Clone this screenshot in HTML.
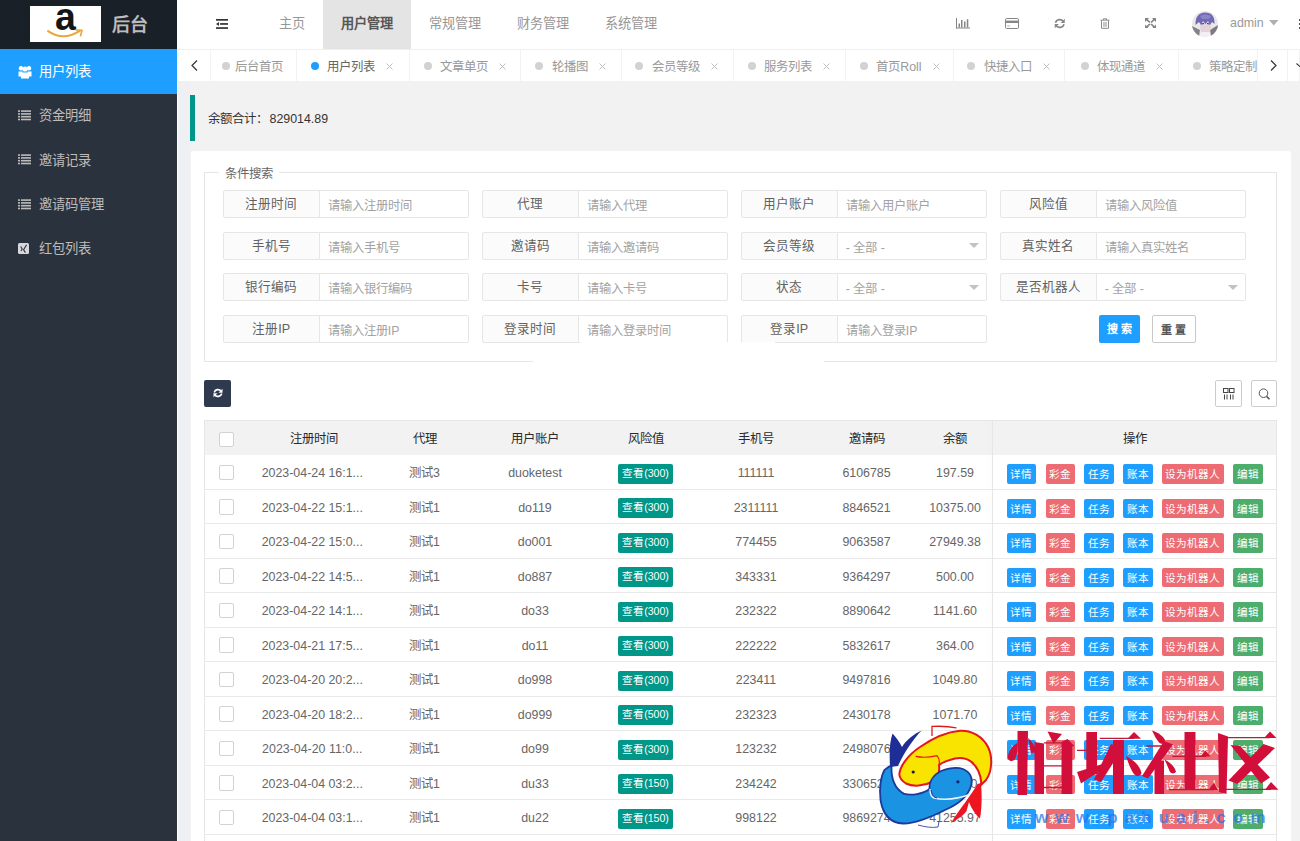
<!DOCTYPE html>
<html lang="zh-CN">
<head>
<meta charset="utf-8">
<style>
*{box-sizing:border-box;margin:0;padding:0}
html,body{width:1300px;height:841px;overflow:hidden}
body{position:relative;background:#f2f2f2;font-family:"Liberation Sans",sans-serif;font-size:12.4px;color:#666}
.a{position:absolute}
svg{display:block}
#logo{left:0;top:0;width:177px;height:49px;background:#192027}
#side{left:0;top:49px;width:177px;height:792px;background:#2a333d}
#hdr{left:177px;top:0;width:1123px;height:50px;background:#fff;border-bottom:1px solid #f0f0f0}
#tabs{left:177px;top:50px;width:1123px;height:31px;background:#fff}
.mi{position:absolute;left:0;width:177px;height:45px;color:#bfbbbb;font-size:13.3px;line-height:45px}
.mi .t{position:absolute;left:39px;top:0}
.mi svg{position:absolute;left:17.5px;top:16.5px}
.nav{position:absolute;top:0;height:49px;line-height:47.4px;color:#979797;font-size:13.2px;text-align:center}
.ico{position:absolute}
.tab{position:absolute;top:0;height:31px;border-right:1px solid #f2f2f2;color:#999;font-size:12.4px;display:flex;align-items:center;padding-left:13.8px;white-space:nowrap;overflow:hidden}
.tab .d{display:inline-block;width:8px;height:8px;border-radius:50%;background:#d2d2d2;margin-right:8.4px}
.tab .x{display:inline-block;margin-left:11.3px;width:7px;height:7px;position:relative;top:1px}
#quote{left:190px;top:95px;width:1100px;height:46px;border-left:5px solid #009688;background:#f2f2f2}
#card{left:191px;top:151px;width:1099.5px;height:700px;background:#fff;border-radius:3px}
#fs{left:204px;top:172px;width:1073px;height:190px;border:1px solid #e6e6e6}
#lg{left:219px;top:164px;padding:0 6px;background:#fff;font-size:12.4px;line-height:20px;color:#666}
.fl{position:absolute;width:96.5px;height:28.3px;border:1px solid #e6e6e6;background:#fbfbfb;border-radius:2px 0 0 2px;text-align:center;line-height:27.5px;color:#626262;font-size:12.6px}
.fi{position:absolute;width:150.5px;height:28.3px;border:1px solid #e6e6e6;background:#fff;border-radius:0 2px 2px 0;line-height:30.4px;color:#a2a2a2;font-size:12.3px;padding-left:8.3px;white-space:nowrap;overflow:hidden}
.fi .tri{position:absolute;right:7.5px;top:10.8px;width:0;height:0;border-left:5.6px solid transparent;border-right:5.6px solid transparent;border-top:5.2px solid #c2c2c2}
.btn{position:absolute;height:28px;line-height:29px;text-align:center;font-size:11px;font-weight:bold;border-radius:2px}
.tb{position:absolute;width:26.5px;height:26.5px;border:1px solid #ccc;border-radius:2px;background:#fff}
#thd{left:204px;top:420px;width:1073px;height:35px;background:#f2f2f2;border:1px solid #e6e6e6;border-bottom:none}
.th{position:absolute;top:421.5px;height:35px;line-height:35px;width:200px;margin-left:-100px;text-align:center;color:#333;font-size:12.4px;font-weight:500;color:#2a2a2a}
.tr{position:absolute;left:0;width:1300px;height:34.51px;line-height:34.51px}
.tr::after{content:'';position:absolute;left:204px;width:1073px;bottom:0;height:1px;background:#e9e9e9}
.c{position:absolute;top:1px;width:200px;margin-left:-100px;text-align:center;color:#666;font-size:12.4px;white-space:nowrap}
.cb{position:absolute;left:218.5px;top:9.5px;width:15.5px;height:15.5px;border:1px solid #d2d2d2;border-radius:2px;background:#fff}
.bd{display:inline-block;font-weight:500;background:#009688;color:#fff;height:19.7px;line-height:19.7px;padding:0 4.4px;font-size:10.6px;border-radius:2px;vertical-align:middle;position:relative;top:0px}
.ops{position:absolute;left:1006.5px;top:0;width:260px;height:34px}
.ops b{position:absolute;top:9.3px;width:29.8px;text-align:center;font-weight:500;color:#fff;height:19.6px;line-height:20.5px;font-size:10.6px;border-radius:2px;white-space:nowrap}
.bb{background:#1E9FFF}.br{background:#ed6b72}.bg{background:#4dad6b}
#fix{left:992px;top:420px;width:1px;height:421px;background:#e6e6e6;box-shadow:-3px 0 6px rgba(0,0,0,.06)}
</style>
</head>
<body>
<!-- logo -->
<div id="logo" class="a">
  <div class="a" style="left:30px;top:6px;width:71px;height:35.5px;background:#fff">
    <svg width="71" height="36" viewBox="0 0 71 36">
      <text x="0" y="0" transform="translate(25,24.4) scale(0.96,1)" font-family="Liberation Sans" font-weight="bold" font-size="39" fill="#151515">a</text>
      <path d="M18.1,25.1 Q33,35.6 49.7,24.8" stroke="#e8a83a" stroke-width="2.1" fill="none" stroke-linecap="round"/>
      <path d="M46.3,24 L52,24.4 L50.6,29.6" stroke="#e8a83a" stroke-width="1.7" fill="none" stroke-linecap="round" stroke-linejoin="round"/>
    </svg>
  </div>
  <div class="a" style="left:112px;top:9.7px;font-size:18px;line-height:30px;color:#bfbbbb;font-weight:bold">后台</div>
</div>
<div id="side" class="a">
  <div class="mi" style="top:0;background:#1E9FFF;color:#fff">
    <svg width="14" height="14" viewBox="0 0 14 14" style="top:15.5px"><g fill="#fff"><circle cx="3" cy="3.2" r="2.2"/><circle cx="11" cy="3.2" r="2.2"/><circle cx="7" cy="4" r="2.6"/><path d="M0.5,6.5 h4 v5 h-4 z M9.5,6.5 h4 v5 h-4 z"/><path d="M3,7.5 h8 v6 h-8 z"/></g></svg>
    <span class="t">用户列表</span></div>
  <div class="mi" style="top:44px"><svg width="13" height="11" viewBox="0 0 13 11"><g fill="#bfbbbb"><rect x="0" y="0.3" width="2" height="1.6"/><rect x="3" y="0.3" width="10" height="1.6"/><rect x="0" y="3.1" width="2" height="1.6"/><rect x="3" y="3.1" width="10" height="1.6"/><rect x="0" y="5.9" width="2" height="1.6"/><rect x="3" y="5.9" width="10" height="1.6"/><rect x="0" y="8.7" width="2" height="1.6"/><rect x="3" y="8.7" width="10" height="1.6"/></g></svg><span class="t">资金明细</span></div>
  <div class="mi" style="top:88.5px"><svg width="13" height="11" viewBox="0 0 13 11"><g fill="#bfbbbb"><rect x="0" y="0.3" width="2" height="1.6"/><rect x="3" y="0.3" width="10" height="1.6"/><rect x="0" y="3.1" width="2" height="1.6"/><rect x="3" y="3.1" width="10" height="1.6"/><rect x="0" y="5.9" width="2" height="1.6"/><rect x="3" y="5.9" width="10" height="1.6"/><rect x="0" y="8.7" width="2" height="1.6"/><rect x="3" y="8.7" width="10" height="1.6"/></g></svg><span class="t">邀请记录</span></div>
  <div class="mi" style="top:133px"><svg width="13" height="11" viewBox="0 0 13 11"><g fill="#bfbbbb"><rect x="0" y="0.3" width="2" height="1.6"/><rect x="3" y="0.3" width="10" height="1.6"/><rect x="0" y="3.1" width="2" height="1.6"/><rect x="3" y="3.1" width="10" height="1.6"/><rect x="0" y="5.9" width="2" height="1.6"/><rect x="3" y="5.9" width="10" height="1.6"/><rect x="0" y="8.7" width="2" height="1.6"/><rect x="3" y="8.7" width="10" height="1.6"/></g></svg><span class="t">邀请码管理</span></div>
  <div class="mi" style="top:177px"><svg width="11" height="11" viewBox="0 0 11 11" style="left:18px;top:17px"><rect x="0" y="0" width="11" height="11" rx="1.5" fill="#d8d8dc"/><path d="M2.6,3.5 L4.2,6 L3,8 M8.6,1.8 L5.6,6.8 L7.4,9.6" stroke="#2a333d" stroke-width="1.1" fill="none"/></svg><span class="t">红包列表</span></div>
</div>
<div id="hdr" class="a">
  <svg class="ico" style="left:39px;top:18.5px" width="12" height="10" viewBox="0 0 12 10"><g fill="#333"><rect x="0" y="0" width="12" height="1.7"/><rect x="4" y="4.1" width="8" height="1.7"/><rect x="0" y="8.2" width="12" height="1.7"/><path d="M0,4.95 L3,3 L3,6.9 Z"/></g></svg>
  <div class="nav" style="left:84px;width:62px">主页</div>
  <div class="nav" style="left:146px;width:88px;background:#e4e4e4;color:#565656;font-weight:bold">用户管理</div>
  <div class="nav" style="left:234px;width:88px">常规管理</div>
  <div class="nav" style="left:322px;width:88px">财务管理</div>
  <div class="nav" style="left:410px;width:88px">系统管理</div>
  <!-- bar chart -->
  <svg class="ico" style="left:779px;top:18px" width="14" height="10.5" viewBox="0 0 14 10.5"><g fill="#858585"><rect x="0" y="0" width="1" height="10.5"/><rect x="0" y="9.5" width="14" height="1"/><rect x="2.5" y="5.5" width="1.5" height="4"/><rect x="5" y="2" width="1.5" height="7.5"/><rect x="8" y="3.5" width="1.5" height="6"/><rect x="10.8" y="1.2" width="1.5" height="8.3"/></g></svg>
  <!-- card -->
  <svg class="ico" style="left:828px;top:17.5px" width="14" height="11" viewBox="0 0 14 11"><rect x="0.5" y="0.5" width="13" height="10" rx="1.2" fill="none" stroke="#858585" stroke-width="1"/><rect x="0.5" y="2.6" width="13" height="2.4" fill="#858585"/><rect x="2" y="7.5" width="3" height="0.9" fill="#aaa"/></svg>
  <!-- refresh -->
  <svg class="ico" style="left:877px;top:17.5px" width="11.5" height="11" viewBox="0 0 12 11"><g fill="none" stroke="#858585" stroke-width="1.8"><path d="M1.5,4.8 A4.6,4.6 0 0 1 9.6,3.2"/><path d="M10.5,6.2 A4.6,4.6 0 0 1 2.4,7.8"/></g><path d="M11.2,0.6 L11.2,4.9 L7,4.9 Z" fill="#858585"/><path d="M0.8,10.4 L0.8,6.1 L5,6.1 Z" fill="#858585"/></svg>
  <!-- trash -->
  <svg class="ico" style="left:922.5px;top:17.5px" width="10" height="11" viewBox="0 0 10 11"><g fill="none" stroke="#8a8a8a" stroke-width="1"><path d="M0.5,2.2 H9.5"/><path d="M3.5,2 V0.8 H6.5 V2"/><path d="M1.5,2.5 V10.3 H8.5 V2.5"/><path d="M3.8,4 V8.8 M5,4 V8.8 M6.2,4 V8.8" stroke="#aaa"/></g></svg>
  <!-- fullscreen -->
  <svg class="ico" style="left:968px;top:17.5px" width="11" height="10.5" viewBox="0 0 11 10.5"><g fill="#858585"><path d="M0,0 H4 L2.8,1.2 L5.5,3.9 L4.3,5.1 L1.6,2.4 L0,4 Z"/><path d="M11,0 H7 L8.2,1.2 L5.5,3.9 L6.7,5.1 L9.4,2.4 L11,4 Z"/><path d="M0,10.5 H4 L2.8,9.3 L5.5,6.6 L4.3,5.4 L1.6,8.1 L0,6.5 Z"/><path d="M11,10.5 H7 L8.2,9.3 L5.5,6.6 L6.7,5.4 L9.4,8.1 L11,6.5 Z"/></g></svg>
  <!-- avatar -->
  <svg class="ico" style="left:1014.5px;top:10.5px" width="26" height="26" viewBox="0 0 26 26"><defs><clipPath id="av"><circle cx="13" cy="13" r="13"/></clipPath></defs><g clip-path="url(#av)"><rect width="26" height="26" fill="#ebe8ec"/><path d="M0,15 L8,19 L7,26 L0,26 Z" fill="#858387"/><path d="M26,14 L18,19 L19,26 L26,26 Z" fill="#7d7b7f"/><ellipse cx="13.5" cy="16" rx="5.5" ry="7" fill="#e2d3da"/><path d="M9,21 L18,21 L19,26 L8,26 Z" fill="#f3eff4"/><path d="M3.5,14 Q3,2 13,1.5 Q23,1.5 22.5,13 L20,11 L18,14 L16,10 L13.5,13 L11,10 L9,14 L7,11 Z" fill="#7069b5"/><path d="M8,5 Q13,2 19,5 L17,8 L10,8 Z" fill="#8a84c8"/><path d="M9.5,13 L12,12.5 M15,12.5 L17.5,13" stroke="#3b3560" stroke-width="1"/></g></svg>
  <div class="nav" style="left:1053px;color:#999;font-size:12.4px;line-height:47px">admin</div>
  <svg class="ico" style="left:1092px;top:20px" width="9.5" height="5.5" viewBox="0 0 9.5 5.5"><path d="M0,0 H9.5 L4.75,5.5 Z" fill="#b0b0b0"/></svg>
  <div class="a" style="left:1121.5px;top:19px;width:3px;height:10px;background:repeating-linear-gradient(#555 0 2px,transparent 2px 4px)"></div>
</div>
<div id="tabs" class="a">
  <svg class="ico" style="left:13.5px;top:10px" width="7" height="11" viewBox="0 0 7 11"><path d="M6,0.5 L1,5.5 L6,10.5" fill="none" stroke="#333" stroke-width="1.2"/></svg>
  <div class="a" style="left:32.5px;top:0;width:1px;height:31px;background:#f2f2f2"></div>
  <div class="tab" style="left:33.0px;width:87.0px;padding-left:12px"><span class="d" style="margin-right:4.5px"></span><span class="tt">后台首页</span></div>
  <div class="tab" style="left:120.0px;width:113.0px"><span class="d" style="background:#1e9fff"></span><span class="tt" style="color:#666">用户列表</span><svg class="x" viewBox="0 0 7 7"><path d="M0.5,0.5 L6.5,6.5 M6.5,0.5 L0.5,6.5" stroke="#b9b9b9" stroke-width="0.9"/></svg></div>
  <div class="tab" style="left:233.0px;width:111.4px"><span class="d"></span><span class="tt">文章单页</span><svg class="x" viewBox="0 0 7 7"><path d="M0.5,0.5 L6.5,6.5 M6.5,0.5 L0.5,6.5" stroke="#b9b9b9" stroke-width="0.9"/></svg></div>
  <div class="tab" style="left:344.4px;width:100.3px"><span class="d"></span><span class="tt">轮播图</span><svg class="x" viewBox="0 0 7 7"><path d="M0.5,0.5 L6.5,6.5 M6.5,0.5 L0.5,6.5" stroke="#b9b9b9" stroke-width="0.9"/></svg></div>
  <div class="tab" style="left:444.7px;width:112.3px"><span class="d"></span><span class="tt">会员等级</span><svg class="x" viewBox="0 0 7 7"><path d="M0.5,0.5 L6.5,6.5 M6.5,0.5 L0.5,6.5" stroke="#b9b9b9" stroke-width="0.9"/></svg></div>
  <div class="tab" style="left:557.0px;width:112.0px"><span class="d"></span><span class="tt">服务列表</span><svg class="x" viewBox="0 0 7 7"><path d="M0.5,0.5 L6.5,6.5 M6.5,0.5 L0.5,6.5" stroke="#b9b9b9" stroke-width="0.9"/></svg></div>
  <div class="tab" style="left:669.0px;width:107.5px"><span class="d"></span><span class="tt">首页Roll</span><svg class="x" viewBox="0 0 7 7"><path d="M0.5,0.5 L6.5,6.5 M6.5,0.5 L0.5,6.5" stroke="#b9b9b9" stroke-width="0.9"/></svg></div>
  <div class="tab" style="left:776.5px;width:111.5px"><span class="d"></span><span class="tt">快捷入口</span><svg class="x" viewBox="0 0 7 7"><path d="M0.5,0.5 L6.5,6.5 M6.5,0.5 L0.5,6.5" stroke="#b9b9b9" stroke-width="0.9"/></svg></div>
  <div class="tab" style="left:888.0px;width:114.0px;padding-left:15.6px"><span class="d"></span><span class="tt">体现通道</span><svg class="x" viewBox="0 0 7 7"><path d="M0.5,0.5 L6.5,6.5 M6.5,0.5 L0.5,6.5" stroke="#b9b9b9" stroke-width="0.9"/></svg></div>
  <div class="tab" style="left:1002.0px;width:121.0px"><span class="d"></span><span class="tt">策略定制</span></div>
  <div class="a" style="left:1080px;top:0;width:31px;height:31px;background:#fff;border-left:1px solid #f2f2f2;border-right:1px solid #f2f2f2">
    <svg class="ico" style="left:12px;top:10px" width="7" height="11" viewBox="0 0 7 11"><path d="M1,0.5 L6,5.5 L1,10.5" fill="none" stroke="#333" stroke-width="1.2"/></svg>
  </div>
  <svg class="ico" style="left:1119px;top:13px" width="6" height="5" viewBox="0 0 6 5"><path d="M0.5,0.5 L5,4.5" stroke="#333" stroke-width="1.1"/></svg>
</div>
<div class="a" style="left:177px;top:81px;width:1px;height:760px;background:#fff"></div>
<div class="a" style="left:178px;top:81px;width:12px;height:760px;background:#eff0f3"></div>
<div id="quote" class="a"><div class="a" style="left:13px;top:1px;line-height:46px;color:#333;font-size:12.4px">余额合计：<span style="margin-left:1.5px">829014.89</span></div></div>
<div id="card" class="a"></div>
<div id="fs" class="a"></div>
<div id="lg" class="a">条件搜索</div>
<div class="fl" style="left:223px;top:190px">注册时间</div>
<div class="fi" style="left:318.5px;top:190px">请输入注册时间</div>
<div class="fl" style="left:482px;top:190px">代理</div>
<div class="fi" style="left:577.5px;top:190px">请输入代理</div>
<div class="fl" style="left:741px;top:190px">用户账户</div>
<div class="fi" style="left:836.5px;top:190px">请输入用户账户</div>
<div class="fl" style="left:1000px;top:190px">风险值</div>
<div class="fi" style="left:1095.5px;top:190px">请输入风险值</div>
<div class="fl" style="left:223px;top:231.6px">手机号</div>
<div class="fi" style="left:318.5px;top:231.6px">请输入手机号</div>
<div class="fl" style="left:482px;top:231.6px">邀请码</div>
<div class="fi" style="left:577.5px;top:231.6px">请输入邀请码</div>
<div class="fl" style="left:741px;top:231.6px">会员等级</div>
<div class="fi" style="left:836.5px;top:231.6px">- 全部 -<i class="tri"></i></div>
<div class="fl" style="left:1000px;top:231.6px">真实姓名</div>
<div class="fi" style="left:1095.5px;top:231.6px">请输入真实姓名</div>
<div class="fl" style="left:223px;top:273px">银行编码</div>
<div class="fi" style="left:318.5px;top:273px">请输入银行编码</div>
<div class="fl" style="left:482px;top:273px">卡号</div>
<div class="fi" style="left:577.5px;top:273px">请输入卡号</div>
<div class="fl" style="left:741px;top:273px">状态</div>
<div class="fi" style="left:836.5px;top:273px">- 全部 -<i class="tri"></i></div>
<div class="fl" style="left:1000px;top:273px">是否机器人</div>
<div class="fi" style="left:1095.5px;top:273px">- 全部 -<i class="tri"></i></div>
<div class="fl" style="left:223px;top:314.5px">注册IP</div>
<div class="fi" style="left:318.5px;top:314.5px">请输入注册IP</div>
<div class="fl" style="left:482px;top:314.5px">登录时间</div>
<div class="fi" style="left:577.5px;top:314.5px">请输入登录时间</div>
<div class="fl" style="left:741px;top:314.5px">登录IP</div>
<div class="fi" style="left:836.5px;top:314.5px">请输入登录IP</div>
<div class="btn" style="left:1098.5px;top:315px;width:41.5px;background:#1E9FFF;color:#fff">搜 索</div>
<div class="btn" style="left:1152px;top:315px;width:43.5px;background:#fff;border:1px solid #c9c9c9;color:#555">重 置</div>
<div class="a" style="left:579.5px;top:342px;width:195px;height:12px;background:#fff"></div>
<div class="a" style="left:533px;top:352px;width:291px;height:14px;background:#fff"></div>
<div class="a" style="left:204px;top:380px;width:27px;height:26.5px;background:#2f3a4f;border-radius:2px"><svg class="ico" style="left:8.5px;top:8px" width="10" height="10" viewBox="0 0 12 11"><g fill="none" stroke="#fff" stroke-width="2"><path d="M1.5,4.8 A4.6,4.6 0 0 1 9.6,3.2"/><path d="M10.5,6.2 A4.6,4.6 0 0 1 2.4,7.8"/></g><path d="M11.4,0.3 L11.4,5.2 L6.6,5.2 Z" fill="#fff"/><path d="M0.6,10.7 L0.6,5.8 L5.4,5.8 Z" fill="#fff"/></svg></div>
<div class="tb" style="left:1215px;top:380px"><svg class="ico" style="left:7px;top:7px" width="12" height="12" viewBox="0 0 12 12"><g fill="none" stroke="#444" stroke-width="1"><rect x="0.5" y="0.5" width="4.5" height="4"/><rect x="6.5" y="0.5" width="4.5" height="4"/><path d="M1.5,6.5 V11.5 M4,6.5 V11.5 M7.5,6.5 V11.5 M10,6.5 V11.5"/></g></svg></div>
<div class="tb" style="left:1250.5px;top:380px"><svg class="ico" style="left:6.5px;top:7px" width="13" height="13" viewBox="0 0 13 13"><circle cx="5.5" cy="5.2" r="4.3" fill="none" stroke="#555" stroke-width="1"/><path d="M8.6,8.4 L11.5,11.3" stroke="#555" stroke-width="1.6"/></svg></div>
<div id="thd" class="a"></div>
<i class="cb" style="top:431.5px"></i>
<div class="th" style="left:314px">注册时间</div>
<div class="th" style="left:424.5px">代理</div>
<div class="th" style="left:535px">用户账户</div>
<div class="th" style="left:645.5px">风险值</div>
<div class="th" style="left:756px">手机号</div>
<div class="th" style="left:866.5px">邀请码</div>
<div class="th" style="left:955px">余额</div>
<div class="th" style="left:1134.5px">操作</div>
<div class="tr" style="top:455.00px"><i class="cb"></i><span class="c" style="left:312.3px">2023-04-24 16:1...</span><span class="c" style="left:424.5px">测试3</span><span class="c" style="left:535px">duoketest</span><span class="c" style="left:645.5px"><b class="bd">查看(300)</b></span><span class="c" style="left:756px">111111</span><span class="c" style="left:866.5px">6106785</span><span class="c" style="left:955px">197.59</span><span class="ops"><b class="bb" style="left:0">详情</b><b class="br" style="left:39px;width:29.5px">彩金</b><b class="bb" style="left:77.8px">任务</b><b class="bb" style="left:116.5px">账本</b><b class="br" style="left:155.7px;width:61.5px">设为机器人</b><b class="bg" style="left:226.5px">编辑</b></span></div>
<div class="tr" style="top:489.51px"><i class="cb"></i><span class="c" style="left:312.3px">2023-04-22 15:1...</span><span class="c" style="left:424.5px">测试1</span><span class="c" style="left:535px">do119</span><span class="c" style="left:645.5px"><b class="bd">查看(300)</b></span><span class="c" style="left:756px">2311111</span><span class="c" style="left:866.5px">8846521</span><span class="c" style="left:955px">10375.00</span><span class="ops"><b class="bb" style="left:0">详情</b><b class="br" style="left:39px;width:29.5px">彩金</b><b class="bb" style="left:77.8px">任务</b><b class="bb" style="left:116.5px">账本</b><b class="br" style="left:155.7px;width:61.5px">设为机器人</b><b class="bg" style="left:226.5px">编辑</b></span></div>
<div class="tr" style="top:524.02px"><i class="cb"></i><span class="c" style="left:312.3px">2023-04-22 15:0...</span><span class="c" style="left:424.5px">测试1</span><span class="c" style="left:535px">do001</span><span class="c" style="left:645.5px"><b class="bd">查看(300)</b></span><span class="c" style="left:756px">774455</span><span class="c" style="left:866.5px">9063587</span><span class="c" style="left:955px">27949.38</span><span class="ops"><b class="bb" style="left:0">详情</b><b class="br" style="left:39px;width:29.5px">彩金</b><b class="bb" style="left:77.8px">任务</b><b class="bb" style="left:116.5px">账本</b><b class="br" style="left:155.7px;width:61.5px">设为机器人</b><b class="bg" style="left:226.5px">编辑</b></span></div>
<div class="tr" style="top:558.53px"><i class="cb"></i><span class="c" style="left:312.3px">2023-04-22 14:5...</span><span class="c" style="left:424.5px">测试1</span><span class="c" style="left:535px">do887</span><span class="c" style="left:645.5px"><b class="bd">查看(300)</b></span><span class="c" style="left:756px">343331</span><span class="c" style="left:866.5px">9364297</span><span class="c" style="left:955px">500.00</span><span class="ops"><b class="bb" style="left:0">详情</b><b class="br" style="left:39px;width:29.5px">彩金</b><b class="bb" style="left:77.8px">任务</b><b class="bb" style="left:116.5px">账本</b><b class="br" style="left:155.7px;width:61.5px">设为机器人</b><b class="bg" style="left:226.5px">编辑</b></span></div>
<div class="tr" style="top:593.04px"><i class="cb"></i><span class="c" style="left:312.3px">2023-04-22 14:1...</span><span class="c" style="left:424.5px">测试1</span><span class="c" style="left:535px">do33</span><span class="c" style="left:645.5px"><b class="bd">查看(300)</b></span><span class="c" style="left:756px">232322</span><span class="c" style="left:866.5px">8890642</span><span class="c" style="left:955px">1141.60</span><span class="ops"><b class="bb" style="left:0">详情</b><b class="br" style="left:39px;width:29.5px">彩金</b><b class="bb" style="left:77.8px">任务</b><b class="bb" style="left:116.5px">账本</b><b class="br" style="left:155.7px;width:61.5px">设为机器人</b><b class="bg" style="left:226.5px">编辑</b></span></div>
<div class="tr" style="top:627.55px"><i class="cb"></i><span class="c" style="left:312.3px">2023-04-21 17:5...</span><span class="c" style="left:424.5px">测试1</span><span class="c" style="left:535px">do11</span><span class="c" style="left:645.5px"><b class="bd">查看(300)</b></span><span class="c" style="left:756px">222222</span><span class="c" style="left:866.5px">5832617</span><span class="c" style="left:955px">364.00</span><span class="ops"><b class="bb" style="left:0">详情</b><b class="br" style="left:39px;width:29.5px">彩金</b><b class="bb" style="left:77.8px">任务</b><b class="bb" style="left:116.5px">账本</b><b class="br" style="left:155.7px;width:61.5px">设为机器人</b><b class="bg" style="left:226.5px">编辑</b></span></div>
<div class="tr" style="top:662.06px"><i class="cb"></i><span class="c" style="left:312.3px">2023-04-20 20:2...</span><span class="c" style="left:424.5px">测试1</span><span class="c" style="left:535px">do998</span><span class="c" style="left:645.5px"><b class="bd">查看(300)</b></span><span class="c" style="left:756px">223411</span><span class="c" style="left:866.5px">9497816</span><span class="c" style="left:955px">1049.80</span><span class="ops"><b class="bb" style="left:0">详情</b><b class="br" style="left:39px;width:29.5px">彩金</b><b class="bb" style="left:77.8px">任务</b><b class="bb" style="left:116.5px">账本</b><b class="br" style="left:155.7px;width:61.5px">设为机器人</b><b class="bg" style="left:226.5px">编辑</b></span></div>
<div class="tr" style="top:696.57px"><i class="cb"></i><span class="c" style="left:312.3px">2023-04-20 18:2...</span><span class="c" style="left:424.5px">测试1</span><span class="c" style="left:535px">do999</span><span class="c" style="left:645.5px"><b class="bd">查看(500)</b></span><span class="c" style="left:756px">232323</span><span class="c" style="left:866.5px">2430178</span><span class="c" style="left:955px">1071.70</span><span class="ops"><b class="bb" style="left:0">详情</b><b class="br" style="left:39px;width:29.5px">彩金</b><b class="bb" style="left:77.8px">任务</b><b class="bb" style="left:116.5px">账本</b><b class="br" style="left:155.7px;width:61.5px">设为机器人</b><b class="bg" style="left:226.5px">编辑</b></span></div>
<div class="tr" style="top:731.08px"><i class="cb"></i><span class="c" style="left:312.3px">2023-04-20 11:0...</span><span class="c" style="left:424.5px">测试1</span><span class="c" style="left:535px">do99</span><span class="c" style="left:645.5px"><b class="bd">查看(300)</b></span><span class="c" style="left:756px">123232</span><span class="c" style="left:866.5px">2498076</span><span class="c" style="left:955px">1208.00</span><span class="ops"><b class="bb" style="left:0">详情</b><b class="br" style="left:39px;width:29.5px">彩金</b><b class="bb" style="left:77.8px">任务</b><b class="bb" style="left:116.5px">账本</b><b class="br" style="left:155.7px;width:61.5px">设为机器人</b><b class="bg" style="left:226.5px">编辑</b></span></div>
<div class="tr" style="top:765.59px"><i class="cb"></i><span class="c" style="left:312.3px">2023-04-04 03:2...</span><span class="c" style="left:424.5px">测试1</span><span class="c" style="left:535px">du33</span><span class="c" style="left:645.5px"><b class="bd">查看(150)</b></span><span class="c" style="left:756px">234242</span><span class="c" style="left:866.5px">3306523</span><span class="c" style="left:955px">3019.00</span><span class="ops"><b class="bb" style="left:0">详情</b><b class="br" style="left:39px;width:29.5px">彩金</b><b class="bb" style="left:77.8px">任务</b><b class="bb" style="left:116.5px">账本</b><b class="br" style="left:155.7px;width:61.5px">设为机器人</b><b class="bg" style="left:226.5px">编辑</b></span></div>
<div class="tr" style="top:800.10px"><i class="cb"></i><span class="c" style="left:312.3px">2023-04-04 03:1...</span><span class="c" style="left:424.5px">测试1</span><span class="c" style="left:535px">du22</span><span class="c" style="left:645.5px"><b class="bd">查看(150)</b></span><span class="c" style="left:756px">998122</span><span class="c" style="left:866.5px">9869274</span><span class="c" style="left:955px">41255.97</span><span class="ops"><b class="bb" style="left:0">详情</b><b class="br" style="left:39px;width:29.5px">彩金</b><b class="bb" style="left:77.8px">任务</b><b class="bb" style="left:116.5px">账本</b><b class="br" style="left:155.7px;width:61.5px">设为机器人</b><b class="bg" style="left:226.5px">编辑</b></span></div>
<div id="fix" class="a"></div>
<div class="a" style="left:1276px;top:420px;width:1px;height:421px;background:#e6e6e6"></div>
<div class="a" style="left:204px;top:455px;width:1px;height:386px;background:#e6e6e6"></div>
<!-- watermark -->
<svg class="a" style="left:875px;top:720px" width="125" height="115" viewBox="0 0 125 115">
  <path d="M57,16 L57,6.4 C65,6 75,6.5 81.4,7.9" fill="none" stroke="#e4161e" stroke-width="1.3"/>
  <path d="M24.3,54.3 C25,46 33,35 45,27 C55,20 70,12 85,10.7 C97,10 108,17 113,27 C118,37 117,52 111,60 L106.5,64.5 C106,55 102,46 95.7,41.4 C91,38 85,37.5 80,38.5 C74,40 68,42 64,45 C65,52 63,58 57,62 C49,66 38,67 31,63.5 C27,61 24.5,57 24.3,54.3 Z" fill="#f9e400" stroke="#e4161e" stroke-width="2"/>
  <path d="M40.7,36.4 C48,38 56,37 62,35.7 C64,38 65,41 64,45" fill="none" stroke="#e4161e" stroke-width="1.2"/>
  <circle cx="38.2" cy="52" r="1.6" fill="#1a1a1a"/>
  <path d="M16.5,46 C16,58 19,68 28.6,73.6 C36,76 48,74 54.5,69 C54,62 58,55 66,51 C74,48 82,47 88,49 C95,52 98,58 96,66 C93,76 84,84 70,90 C56,97 40,104 28,103.5 C16,103 8,95 5.5,80 C4,68 6,56 9.5,50 C12,48 14,46 16.5,46 Z" fill="#1a93e3" stroke="#1c3a9a" stroke-width="1.8"/>
  <path d="M55,69 C55,74 56,77 59,78 C68,80 80,80 96,74" fill="none" stroke="#e8f4ff" stroke-width="1.4"/><path d="M56,70 C57,75 59,77.5 62,78" fill="none" stroke="#1c3a9a" stroke-width="1"/>
  <path d="M43,105 C50,107 57,108 63,107 L64,101" fill="none" stroke="#3a3fa0" stroke-width="0.9"/>
  <circle cx="82.9" cy="61.8" r="1.6" fill="#14246e"/>
  <path d="M17.5,13.5 C14,24 14.5,36 15,47 L23,46 C28,35 36,22 46.5,10.5 C39,14 31,20 27,27 C24.5,22 21,17 17.5,13.5 Z" fill="#1f2e96"/>
  <path d="M102.5,64 C97,74 84,90 76,103 C83,99 89,95 91.5,91 L94,82 C96.5,89 101,95 105,98.4 C107,88 107,74 106,63 Z" fill="#ec1520"/>
</svg>
<svg class="a" style="left:1000px;top:725px" width="290" height="75" viewBox="0 0 290 75"><g fill="#d10f3a">
<path d="M17.5,6 L28,6 L27,70 L17.5,70 Z"/>
<path d="M17,18 C11,22 7.5,28 8,33.5 C9.5,37 14,37 15.5,33 C17.5,28 18.5,23 17,18 Z"/>
<path d="M28,13 C32,16.5 35.5,21 36.5,27.5 L31,28 C30,22.5 29,17.5 28,13 Z"/>
<path d="M34.5,17 L44,18.5 L44,69 L34.5,69 Z"/>
<path d="M47.5,6.5 L62,9 L53.5,18.8 Z"/>
<path d="M61.5,17 L67.5,14 L74.5,21 L72.3,21.5 L72.3,69 L61.5,69 Z"/>
<path d="M86.3,7 L97,7 L97,49 L86.3,51.5 Z"/>
<path d="M77,47 L104,38.5 L105,42.5 L81,58.5 Z"/>
<path d="M127.5,13.8 L134,7 L141,13.8 Z"/>
<path d="M113,15 L124,15 L124,69 L113,69 Z"/>
<path d="M111,19 L123,22.5 L101,57 L94,54.5 Z"/>
<path d="M126,31 C134,35 140,41 141.5,48 C140.5,52 136,52 133.5,48.5 C130,43 128,37 126,31 Z"/>
<path d="M152,5.5 C158,7.5 163,11 165,15 C164.5,18.5 161.5,19.5 159.5,18 C156.5,14.5 154,10 152,5.5 Z"/>
<path d="M164,16 L173,19.5 L148,53.5 L142,51 Z"/>
<path d="M154.5,35.5 L164,35.5 L164,69 L154.5,69 Z"/>
<path d="M164.5,34.5 C170,37.5 174.5,41 176,46.5 C175,49 171.5,49 170,47 C168,42.5 166.5,38.5 164.5,34.5 Z"/>
<path d="M184.5,7 L195.5,7 L195.5,64.6 L184.5,64.6 Z"/>
<path d="M200.5,31.6 L205.5,25.5 L210.5,31.6 Z"/>
<path d="M208.5,65 L214,57.5 L218,65 Z"/>
<path d="M218,8 L228,11.5 L226.5,69 L219,67 Z"/>
<path d="M264,13 L270,6.5 L276.5,13 Z"/>
<path d="M265,64.8 L271,57 L278.5,64.8 Z"/>
<path d="M230.5,20 L240,21 L270,52.5 L261,58.5 Z"/>
<path d="M263.5,19 L275,23 L237.5,59 L228.5,55.5 Z"/>
</g><g stroke="#c0183a" stroke-width="1.3" fill="none">
<path d="M44,17.8 H62 M44,40.9 H62 M44,62.5 H62"/>
<path d="M77,25.3 H97 M99.8,13.3 H134"/>
<path d="M146.5,21 H169 M172.3,31.3 H206 M169,64.7 H214"/>
<path d="M227,12.6 H270 M226,64.3 H271"/>
</g></svg>
<div class="a" style="left:1035px;top:803px;font-family:'Liberation Sans',sans-serif;font-size:17px;font-weight:bold;line-height:30px;color:rgba(35,115,235,.72);letter-spacing:7.1px;white-space:nowrap">www.pahuai.com</div>
</body>
</html>
